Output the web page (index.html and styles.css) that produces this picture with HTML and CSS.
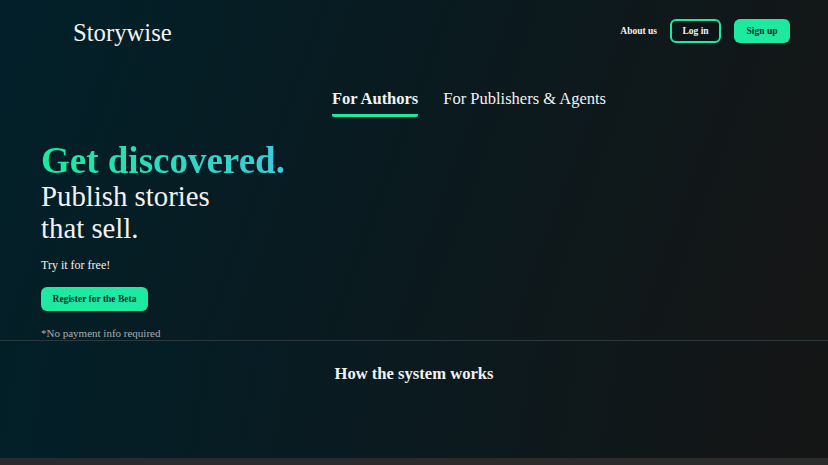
FILE: index.html
```html
<!DOCTYPE html>
<html lang="en">
<head>
  <meta charset="UTF-8" />
  <meta name="viewport" content="width=device-width, initial-scale=1.0" />
  <title>Storywise</title>
  <link rel="stylesheet" href="styles.css">
</head>
<body>
  <div class="top">
    <header class="header">
      <div class="logo">Storywise</div>
      <nav class="nav">
        <a href="#" class="nav-link">About us</a>
        <a href="#" class="btn btn-outline">Log in</a>
        <a href="#" class="btn btn-solid">Sign up</a>
      </nav>
    </header>

    <div class="tabs">
      <div class="tab active">For Authors</div>
      <div class="tab">For Publishers &amp; Agents</div>
    </div>

    <section class="hero">
      <h1 class="hero-title">Get discovered.</h1>
      <p class="hero-sub">Publish stories<br>that sell.</p>
      <p class="hero-try">Try it for free!</p>
      <a href="#" class="btn btn-solid btn-beta">Register for the Beta</a>
      <p class="hero-note">*No payment info required</p>
    </section>
  </div>

  <section class="how">
    <h2>How the system works</h2>
  </section>

  <div class="footer-strip"></div>
</body>
</html>
```

FILE: styles.css
```css
body {
  margin: 0;
  padding: 0;
  font-family: "Liberation Serif", "Times New Roman", serif;
  color: #f2f2f2;
  background: #2b2b2b;
  overflow: hidden;
}

.top {
  background: linear-gradient(110deg, #02202a 0%, #0a1a1f 50%, #161616 100%);
  height: 340px;
  border-bottom: 1px solid #2c3a3f;
}

.header {
  display: flex;
  justify-content: space-between;
  align-items: center;
  padding: 19px 38px 0 73px;
  height: 24px;
}

.logo {
  font-size: 24.7px;
  color: #f4f4f4;
  margin-top: 3px;
}

.nav {
  display: flex;
  align-items: center;
}

.nav-link {
  color: #f2f2f2;
  font-weight: bold;
  font-size: 9.5px;
  text-decoration: none;
  margin-right: 13px;
}

.btn {
  display: inline-flex;
  align-items: center;
  justify-content: center;
  box-sizing: border-box;
  height: 24px;
  border-radius: 6px;
  font-weight: bold;
  font-size: 9.5px;
  text-decoration: none;
}

.btn-outline {
  width: 51px;
  border: 2px solid #1de9a0;
  color: #f2f2f2;
  background: #0c1518;
  margin-right: 13px;
}

.btn-solid {
  width: 56px;
  background: #1de9a0;
  color: #0d2a2a;
}

.tabs {
  display: flex;
  justify-content: center;
  gap: 25px;
  margin-top: 46px;
  padding-left: 110px;
}

.tab {
  font-size: 16.5px;
  padding-bottom: 5px;
  border-bottom: 3px solid transparent;
}

.tab.active {
  font-weight: bold;
  border-bottom-color: #1de9a0;
  border-radius: 2px;
}

.hero {
  padding-left: 41px;
  margin-top: 23px;
}

.hero-title {
  margin: 0;
  font-size: 37px;
  line-height: 41px;
  background: linear-gradient(90deg, #1de9a0 0%, #3fc9dc 100%);
  -webkit-background-clip: text;
  background-clip: text;
  color: transparent;
  display: inline-block;
}

.hero-sub {
  margin: -1px 0 0;
  font-size: 28.8px;
  line-height: 32px;
}

.hero-try {
  margin: 14px 0 0;
  font-size: 12px;
}

.btn-beta {
  width: 107px;
  margin-top: 14px;
  font-size: 9.5px;
}

.hero-note {
  margin: 16px 0 0;
  font-size: 11px;
  color: #a9aeb0;
}

.how {
  height: 117px;
  background: linear-gradient(100deg, #021f28 0%, #0b1a1f 50%, #151515 100%);
  text-align: center;
}

.how h2 {
  margin: 0;
  padding-top: 23px;
  font-size: 16.6px;
}

.footer-strip {
  height: 10px;
  background: #2b2b2b;
}
```
